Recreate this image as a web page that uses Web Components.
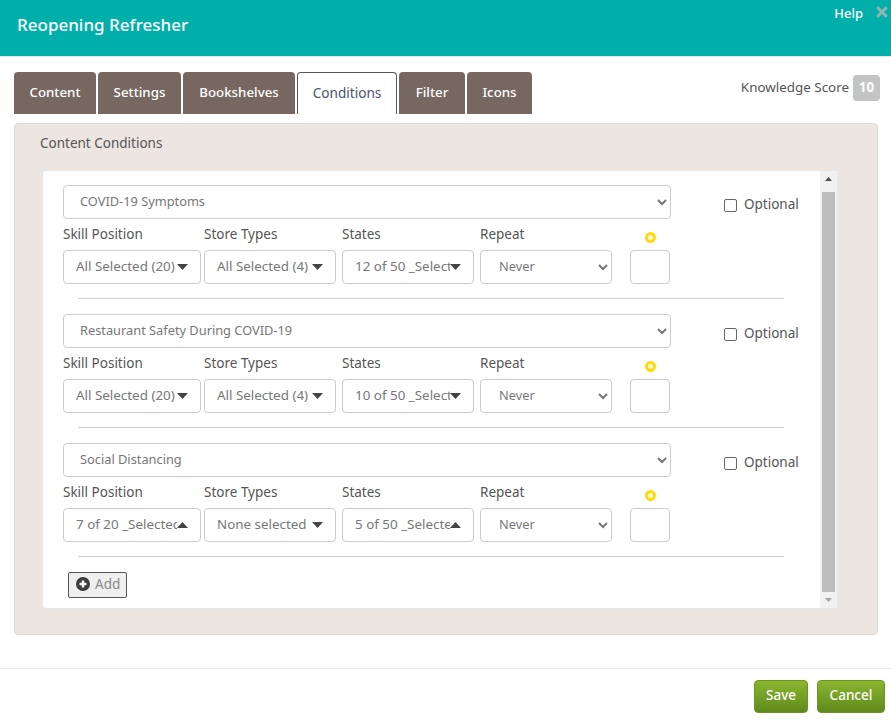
<!DOCTYPE html>
<html>
<head>
<meta charset="utf-8">
<title>Reopening Refresher</title>
<style>
    html, body { margin: 0; padding: 0; background: #fff; }
    body { width: 891px; height: 720px; overflow: hidden; font-family: "Noto Sans", "Liberation Sans", sans-serif; font-size: 14px; color: #555; }
</style>
</head>
<body>
<modal-shell>
    <modal-header slot="header" title-text="Reopening Refresher"></modal-header>
    <tab-bar slot="tabs" active="Conditions" tabs="Content,Settings,Bookshelves,Conditions,Filter,Icons" score="10"></tab-bar>
    <conditions-panel slot="body">
        <condition-row topic="COVID-19 Symptoms" skill="All Selected (20)" store="All Selected (4)" states="12 of 50 _Selected"></condition-row>
        <condition-row topic="Restaurant Safety During COVID-19" skill="All Selected (20)" store="All Selected (4)" states="10 of 50 _Selected"></condition-row>
        <condition-row topic="Social Distancing" skill="7 of 20 _Selected" store="None selected" states="5 of 50 _Selected" up-skill up-states></condition-row>
    </conditions-panel>
    <modal-footer slot="footer"></modal-footer>
</modal-shell>

<script>
const FONT = '"Noto Sans", "Liberation Sans", sans-serif';

class ModalShell extends HTMLElement {
    connectedCallback() {
        this.attachShadow({ mode: 'open' }).innerHTML = `
            <style>
                :host { display: block; width: 891px; height: 720px; }
                .body { padding: 0 13px 0 14px; }
            </style>
            <slot name="header"></slot>
            <slot name="tabs"></slot>
            <div class="body"><slot name="body"></slot></div>
            <slot name="footer"></slot>
        `;
    }
}

class ModalHeader extends HTMLElement {
    connectedCallback() {
        this.attachShadow({ mode: 'open' }).innerHTML = `
            <style>
                :host { display: flex; justify-content: space-between; box-sizing: border-box; height: 57px; background: #00afa9; border-bottom: 1px solid #e5e5e5; color: #fff; font-family: ${FONT}; }
                h1 { margin: 0; padding: 12px 0 0 17px; font-size: 17px; line-height: 26px; font-weight: 500; }
                .side { display: flex; gap: 13px; padding: 4px 3px 0 0; height: 18px; }
                .help { font-size: 13px; line-height: 18px; font-weight: 500; }
                svg { width: 12px; height: 12px; margin-top: 2px; }
            </style>
            <h1>${this.getAttribute('title-text')}</h1>
            <div class="side">
                <span class="help">Help</span>
                <svg viewBox="0 0 12 12"><path d="M1.2 1.2 10.8 10.8M10.8 1.2 1.2 10.8" stroke="#8fb3ae" stroke-width="3" fill="none"/></svg>
            </div>
        `;
    }
}

class TabBar extends HTMLElement {
    connectedCallback() {
        const active = this.getAttribute('active');
        const widths = { Content: 82, Settings: 83, Bookshelves: 112, Conditions: 100, Filter: 66, Icons: 65 };
        const tabs = this.getAttribute('tabs').split(',').map(name => `
            <div class="tab ${name === active ? 'active' : ''}" style="width:${widths[name]}px">${name}</div>
        `).join('');
        this.attachShadow({ mode: 'open' }).innerHTML = `
            <style>
                :host { display: flex; justify-content: space-between; height: 66px; padding: 15px 11px 0 14px; box-sizing: border-box; font-family: ${FONT}; }
                .tabs { display: flex; gap: 2px; height: 42px; }
                .tab { box-sizing: border-box; height: 42px; line-height: 40px; text-align: center; background: #766760; color: #fff; font-size: 13.3px; font-weight: 500; border-radius: 4px 4px 0 0; }
                .tab.active { background: #fff; color: #4c5468; font-weight: 400; font-size: 13.6px; border: 1px solid #555; border-bottom: 0; }
                .score { display: flex; gap: 4px; height: 26px; margin-top: 3px; align-items: center; color: #555; font-size: 13.4px; }
                .score .label { padding-bottom: 2px; }
                .badge { width: 27px; height: 26px; line-height: 25px; text-align: center; background: #c4c4c4; color: #fff; font-weight: 700; border-radius: 4px; }
            </style>
            <div class="tabs">${tabs}</div>
            <div class="score"><span class="label">Knowledge Score</span><span class="badge">${this.getAttribute('score')}</span></div>
        `;
    }
}

class ConditionsPanel extends HTMLElement {
    connectedCallback() {
        this.attachShadow({ mode: 'open' }).innerHTML = `
            <style>
                :host { display: block; box-sizing: border-box; height: 512px; padding: 9px 40px 26px 27px; background: #ece5e0; border: 1px solid #e0dad5; border-radius: 4px; font-family: ${FONT}; }
                h2 { margin: 0 0 17px -2px; font-size: 13.5px; line-height: 20px; font-weight: 400; color: #555; }
                .box { display: flex; height: 439px; background: #fff; border: 1px solid #e6e6e6; border-right: 0; border-radius: 3px; box-sizing: border-box; }
                .rows { flex: 1; padding: 14px 0 0 20px; min-width: 0; }
                .add { display: flex; align-items: center; gap: 5px; box-sizing: border-box; height: 26px; width: 59px; margin-left: 5px; padding: 0 0 2px 7px; background: #efefef; border: 1px solid #555; border-radius: 2px; color: #888; font-size: 13.5px; }
                .add svg { width: 14px; height: 14px; }
                .bar { flex: none; display: flex; flex-direction: column; align-items: center; width: 17px; background: #f1f1f1; }
                .arrow { flex: none; box-sizing: border-box; height: 21px; width: 100%; display: flex; justify-content: center; padding-top: 6px; }
                .arrow svg { width: 7px; height: 4px; }
                .thumb { flex: 1; width: 13px; background: #bdbdbd; }
            </style>
            <h2>Content Conditions</h2>
            <div class="box">
                <div class="rows">
                    <slot></slot>
                    <div class="add">
                        <svg viewBox="0 0 14 14"><circle cx="7" cy="7" r="7" fill="#3c3c3c"/><path d="M7 3.5v7M3.5 7h7" stroke="#fff" stroke-width="2.4"/></svg>
                        <span>Add</span>
                    </div>
                </div>
                <div class="bar">
                    <div class="arrow"><svg viewBox="0 0 7 4"><path d="M3.5 0 7 4H0z" fill="#505050"/></svg></div>
                    <div class="thumb"></div>
                    <div class="arrow" style="height:16px"><svg viewBox="0 0 7 4"><path d="M0 0h7L3.5 4z" fill="#a3a3a3"/></svg></div>
                </div>
            </div>
        `;
    }
}

class ConditionRow extends HTMLElement {
    connectedCallback() {
        const attr = name => this.getAttribute(name);
        this.attachShadow({ mode: 'open' }).innerHTML = `
            <style>
                :host { display: block; height: 129px; box-sizing: border-box; font-family: ${FONT}; }
                .top { display: flex; align-items: flex-start; height: 34px; }
                select { box-sizing: border-box; height: 34px; padding-bottom: 2px; font: inherit; font-size: 12.8px; color: #777; background: #fff; border: 1px solid #ccc; border-radius: 4px; outline: 0; }
                .topic { width: 608px; padding-left: 12px; }
                .opt { display: flex; gap: 7px; margin: 9px 0 0 53px; font-size: 13.5px; line-height: 20px; color: #555; }
                .box { width: 13px; height: 13px; margin-top: 5px; box-sizing: border-box; border: 1px solid #666; border-radius: 2px; background: #fff; }
                .cols { display: flex; margin-top: 5px; }
                .col { display: flex; flex-direction: column; gap: 6px; margin-right: 6px; }
                .col label { height: 20px; line-height: 20px; font-size: 13.5px; color: #555; }
                .col.skill { margin-right: 3px; }
                .repeat { width: 132px; padding-left: 14px; }
                .pts { width: 40px; margin-left: 12px; align-items: center; }
                .dot { width: 11px; height: 11px; margin-top: 8px; margin-bottom: 1px; box-sizing: border-box; border: 3px solid #ffd90f; border-radius: 50%; background: #fff8d0; }
                input { box-sizing: border-box; width: 40px; height: 34px; border: 1px solid #ccc; border-radius: 4px; }
                hr { margin: 14px 0 0 15px; width: 706px; height: 1px; border: 0; background: #ccc; }
            </style>
            <div class="top">
                <select class="topic"><option>${attr('topic')}</option></select>
                <div class="opt"><span class="box"></span><span>Optional</span></div>
            </div>
            <div class="cols">
                <div class="col skill"><label>Skill Position</label><multi-select width="138" text="${attr('skill')}" ${this.hasAttribute('up-skill') ? 'open' : ''}></multi-select></div>
                <div class="col"><label>Store Types</label><multi-select width="132" text="${attr('store')}"></multi-select></div>
                <div class="col"><label>States</label><multi-select width="132" text="${attr('states')}" ${this.hasAttribute('up-states') ? 'open' : ''}></multi-select></div>
                <div class="col"><label>Repeat</label><select class="repeat"><option>Never</option></select></div>
                <div class="col pts"><span class="dot"></span><input type="text"></div>
            </div>
            <hr>
        `;
    }
}

class MultiSelect extends HTMLElement {
    connectedCallback() {
        const width = this.getAttribute('width');
        const path = this.hasAttribute('open') ? 'M5.5 0 11 6H0z' : 'M0 0h11L5.5 6z';
        this.attachShadow({ mode: 'open' }).innerHTML = `
            <style>
                :host { display: flex; align-items: center; box-sizing: border-box; width: ${width}px; height: 34px; padding: 0 12px; background: #fff; border: 1px solid #ccc; border-radius: 4px; font-size: 13.4px; color: #777; }
                span { flex: 1; min-width: 0; overflow: hidden; white-space: nowrap; padding-bottom: 2px; }
                svg { flex: none; width: 11px; height: 6px; }
            </style>
            <span>${this.getAttribute('text')}</span>
            <svg viewBox="0 0 11 6"><path d="${path}" fill="#444"/></svg>
        `;
    }
}

class ModalFooter extends HTMLElement {
    connectedCallback() {
        this.attachShadow({ mode: 'open' }).innerHTML = `
            <style>
                :host { display: flex; justify-content: flex-end; gap: 9px; margin-top: 33px; padding: 11px 6px 0 0; border-top: 1px solid #e5e5e5; font-family: ${FONT}; }
                .btn { box-sizing: border-box; height: 33px; line-height: 29px; text-align: center; color: #fff; font-size: 13.5px; font-weight: 500; border: 1px solid #6d9422; border-radius: 4px; background: linear-gradient(#8ab52f, #5f8a1c); }
            </style>
            <div class="btn" style="width:54px">Save</div>
            <div class="btn" style="width:68px">Cancel</div>
        `;
    }
}

customElements.define('modal-shell', ModalShell);
customElements.define('modal-header', ModalHeader);
customElements.define('tab-bar', TabBar);
customElements.define('conditions-panel', ConditionsPanel);
customElements.define('condition-row', ConditionRow);
customElements.define('multi-select', MultiSelect);
customElements.define('modal-footer', ModalFooter);
</script>
</body>
</html>
